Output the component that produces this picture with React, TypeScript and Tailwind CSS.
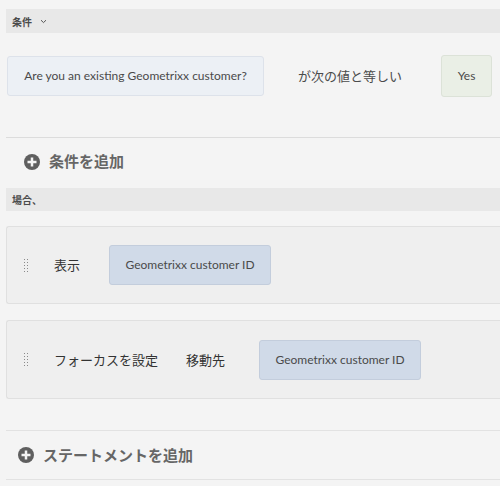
const jp = { fontFamily: '"Noto Sans CJK JP", "Open Sans", sans-serif' }
const lat = { fontFamily: 'Lato, "Noto Sans CJK JP", sans-serif' }

function PlusIcon() {
  return (
    <svg width="16" height="16" viewBox="0 0 16 16" className="shrink-0">
      <circle cx="8" cy="8" r="8" fill="#5f5f5f" />
      <rect x="3.5" y="6.75" width="9" height="2.5" fill="#f4f4f4" />
      <rect x="6.75" y="3.5" width="2.5" height="9" fill="#f4f4f4" />
    </svg>
  )
}

function Grip() {
  return (
    <div className="grid grid-cols-2 gap-x-[2px] gap-y-[2px] w-[4px] shrink-0">
      {Array.from({ length: 10 }).map((_, i) => (
        <span key={i} className="w-[1px] h-[1px] bg-[#8a8a8a]" />
      ))}
    </div>
  )
}

function Token({ children }: { children: React.ReactNode }) {
  return (
    <div
      className="w-[162px] h-[40px] flex items-center justify-center rounded-[3px] bg-[#d0dae8] border border-[#c3cddc] text-[12px] text-[#4a4a4a]"
      style={lat}
    >
      {children}
    </div>
  )
}

export default function App() {
  return (
    <div className="w-[500px] h-[486px] bg-[#f4f4f4] overflow-hidden pl-[6px] text-[#323232]">
      {/* condition header */}
      <div className="mt-[9px] h-[24px] bg-[#e8e8e8] flex items-center pl-[6px] gap-[8px]">
        <span className="text-[10px] font-bold text-[#4b4b4b]" style={jp}>条件</span>
        <svg width="7" height="5" viewBox="0 0 7 5">
          <path d="M1 1.2 L3.5 3.6 L6 1.2" stroke="#555" strokeWidth="1" fill="none" />
        </svg>
      </div>

      {/* condition row */}
      <div className="mt-[22px] flex items-center h-[42px]">
        <div
          className="ml-[1px] w-[257px] h-[40px] flex items-center justify-center rounded-[3px] bg-[#ecf0f5] border border-[#dde2ea] text-[12px] text-[#4a4a4a]"
          style={lat}
        >
          Are you an existing Geometrixx customer?
        </div>
        <span className="ml-[34px] text-[13px] text-[#4b4b4b]" style={jp}>が次の値と等しい</span>
        <div
          className="ml-auto mr-[8px] w-[51px] h-[42px] flex items-center justify-center rounded-[3px] bg-[#eaefe6] border border-[#dce2d8] text-[12px] text-[#4a4a4a]"
          style={lat}
        >
          Yes
        </div>
      </div>

      <div className="mt-[40px] border-t border-[#dcdcdc]" />

      <div className="h-[47px] flex items-center pl-[18px] gap-[9px]">
        <PlusIcon />
        <span className="text-[15px] font-bold text-[#666]" style={jp}>条件を追加</span>
      </div>

      {/* when header */}
      <div className="mt-[3px] h-[23px] bg-[#e8e8e8] flex items-center pl-[6px]">
        <span className="text-[10px] font-bold text-[#4b4b4b]" style={jp}>場合、</span>
      </div>

      {/* statement 1 */}
      <div className="mt-[15px] h-[78px] bg-[#efefef] border border-[#e0e0e0] border-r-0 rounded-l-[3px] flex items-center pl-[17px]">
        <Grip />
        <span className="ml-[26px] text-[13px] text-[#333]" style={jp}>表示</span>
        <div className="ml-[29px]">
          <Token>Geometrixx customer ID</Token>
        </div>
      </div>

      {/* statement 2 */}
      <div className="mt-[16px] h-[79px] bg-[#efefef] border border-[#e0e0e0] border-r-0 rounded-l-[3px] flex items-center pl-[17px]">
        <Grip />
        <span className="ml-[26px] text-[13px] text-[#333]" style={jp}>フォーカスを設定</span>
        <span className="ml-[28px] text-[13px] text-[#333]" style={jp}>移動先</span>
        <div className="ml-[34px]">
          <Token>Geometrixx customer ID</Token>
        </div>
      </div>

      <div className="mt-[31px] border-t border-[#e2e2e2]" />

      <div className="h-[48px] flex items-center pl-[12px] gap-[9px]">
        <PlusIcon />
        <span className="text-[15px] font-bold text-[#666]" style={jp}>ステートメントを追加</span>
      </div>

      <div className="border-t border-[#e2e2e2]" />
    </div>
  )
}
